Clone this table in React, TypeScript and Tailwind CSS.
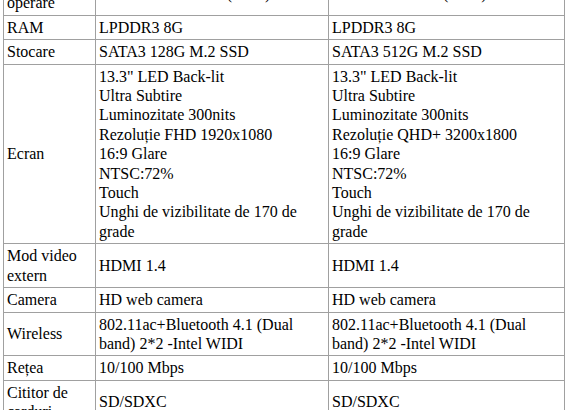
import React from "react";

type Row = { label: React.ReactNode; a: React.ReactNode; b: React.ReactNode };

const ecran = (rez: string) => (
  <>
    13.3" LED Back-lit
    <br />
    Ultra Subtire
    <br />
    Luminozitate 300nits
    <br />
    {rez}
    <br />
    16:9 Glare
    <br />
    NTSC:72%
    <br />
    Touch
    <br />
    Unghi de vizibilitate de 170 de
    <br />
    grade
  </>
);

const wireless = (
  <>
    802.11ac+Bluetooth 4.1 (Dual
    <br />
    band) 2*2 -Intel WIDI
  </>
);

const rows: Row[] = [
  {
    label: (
      <>
        Sistem de
        <br />
        operare
      </>
    ),
    a: "Windows 10 Home (64bit)",
    b: "Windows 10 Pro (64bit)",
  },
  { label: "RAM", a: "LPDDR3 8G", b: "LPDDR3 8G" },
  { label: "Stocare", a: "SATA3 128G M.2 SSD", b: "SATA3 512G M.2 SSD" },
  { label: "Ecran", a: ecran("Rezoluție FHD 1920x1080"), b: ecran("Rezoluție QHD+ 3200x1800") },
  {
    label: (
      <>
        Mod video
        <br />
        extern
      </>
    ),
    a: "HDMI 1.4",
    b: "HDMI 1.4",
  },
  { label: "Camera", a: "HD web camera", b: "HD web camera" },
  { label: "Wireless", a: wireless, b: wireless },
  { label: "Rețea", a: "10/100 Mbps", b: "10/100 Mbps" },
  {
    label: (
      <>
        Cititor de
        <br />
        carduri
      </>
    ),
    a: "SD/SDXC",
    b: "SD/SDXC",
  },
];

const cell = "border border-[#a0a0a0] px-[3px] py-[2px] align-middle";

export default function App() {
  return (
    <div className="bg-white h-[410px] overflow-hidden font-['Liberation_Serif','Times_New_Roman',serif] text-[16px] leading-[19.4px] text-black">
      <table className="ml-[3px] mt-[-29px] w-[561px] table-fixed border-collapse">
        <colgroup>
          <col className="w-[92px]" />
          <col className="w-[233px]" />
          <col className="w-[236px]" />
        </colgroup>
        <tbody>
          {rows.map((r, i) => (
            <tr key={i}>
              <td className={cell}>{r.label}</td>
              <td className={cell}>{r.a}</td>
              <td className={cell}>{r.b}</td>
            </tr>
          ))}
        </tbody>
      </table>
    </div>
  );
}
